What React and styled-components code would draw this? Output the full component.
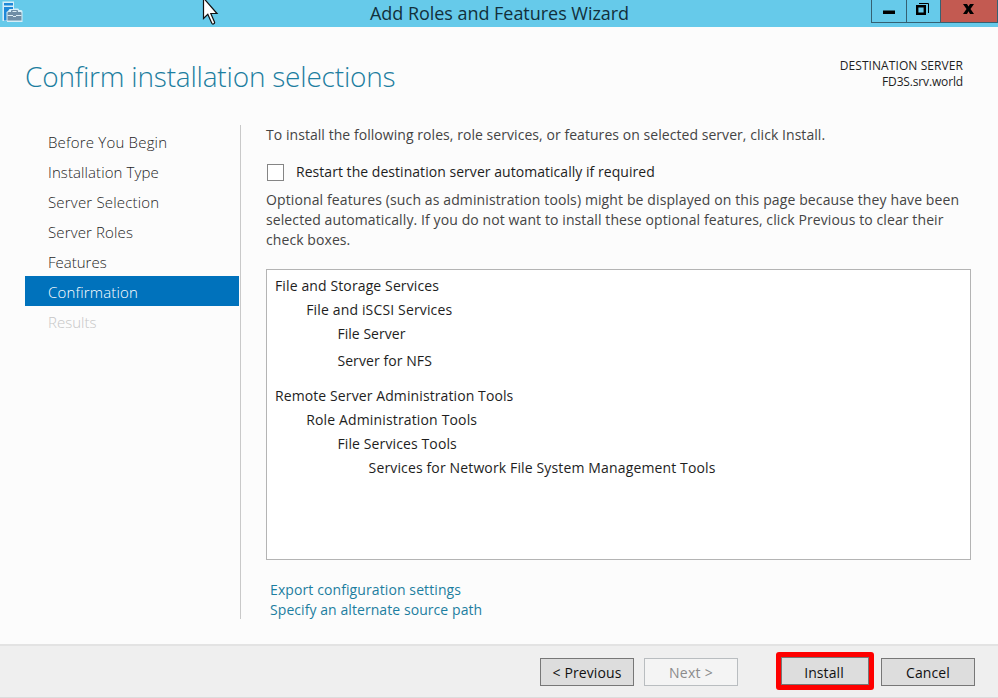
import React from 'react';
import styled, { createGlobalStyle } from 'styled-components';

const GlobalStyle = createGlobalStyle`
  * { box-sizing: border-box; }
  html, body { margin: 0; padding: 0; overflow: hidden; }
`;

const Wizard = styled.div`
  position: relative;
  display: flex;
  flex-direction: column;
  width: 998px;
  height: 698px;
  background: #fcfcfc;
  color: #1e1e1e;
  font-family: "Open Sans", "Noto Sans", sans-serif;
  font-size: 14px;
  line-height: 20px;
  white-space: nowrap;
  overflow: hidden;
`;

const TitleBar = styled.header`
  display: grid;
  grid-template-columns: 370px 1fr 127px;
  height: 27px;
  flex: none;
  background: #66caea;
`;

const AppIcon = styled.svg`
  display: block;
  width: 24px;
  height: 24px;
`;

const WindowTitle = styled.h1`
  margin: 0;
  font-size: 18px;
  font-weight: 400;
  line-height: 26px;
  letter-spacing: -0.04px;
  color: #12303b;
`;

const WindowControls = styled.div`
  display: flex;
  height: 23px;
  border: 1px solid #356172;
  border-top: 0;
`;

const ControlButton = styled.button`
  display: block;
  width: ${(p) => p.$width}px;
  height: 22px;
  padding: 0;
  border: 0;
  border-left: ${(p) => (p.$first ? '0' : '1px solid #356172')};
  background: ${(p) => (p.$danger ? '#c35a51' : 'transparent')};
`;

const Glyph = styled.svg`
  display: block;
  width: 100%;
  height: 22px;
`;

const Cursor = styled.svg`
  position: absolute;
  left: 201px;
  top: 0;
  width: 18px;
  height: 26px;
`;

const Heading = styled.div`
  display: flex;
  justify-content: space-between;
  height: 98px;
  padding: 30px 35px 0 25px;
`;

const PageTitle = styled.h2`
  margin: 0;
  font-size: 28px;
  font-weight: 300;
  line-height: 38px;
  letter-spacing: -0.2px;
  color: #1c7ea0;
`;

const Destination = styled.div`
  padding-top: 1px;
  font-size: 12px;
  line-height: 16px;
  text-align: right;
`;

const Text = styled.span`
  letter-spacing: ${(p) => p.$track}px;
`;

const Body = styled.div`
  display: flex;
  height: 494px;
  flex: none;
`;

const Steps = styled.nav`
  width: 241px;
  padding: 1px 1px 0 25px;
  border-right: 1px solid #c9c9c9;
`;

const Step = styled.div`
  height: 30px;
  padding-left: 23px;
  font-size: 15px;
  font-weight: 300;
  line-height: 32px;
  color: ${(p) => (p.$current ? '#ffffff' : p.$disabled ? '#c6c6c6' : '#1e1e1e')};
  background: ${(p) => (p.$current ? '#0072bc' : 'transparent')};
`;

const Content = styled.main`
  width: 705px;
  margin-left: 25px;
`;

const Paragraph = styled.p`
  margin: 0;
  color: #444;
`;

const CheckRow = styled.label`
  display: flex;
  align-items: center;
  gap: 12px;
  height: 20px;
  margin: 17px 0 8px;
  padding-left: 1px;
  line-height: 22px;
`;

const CheckBox = styled.span`
  width: 17px;
  height: 17px;
  border: 1px solid #858585;
  background: #fff;
`;

const SelectionList = styled.ul`
  height: 291px;
  margin: 19px 0 0;
  padding: 6px 0 0 8px;
  border: 1px solid #b4b4b4;
  background: #fff;
  list-style: none;
`;

const Selection = styled.li`
  height: 20px;
  margin-top: ${(p) => p.$gap}px;
  padding-left: ${(p) => p.$level * 31.2}px;
`;

const Links = styled.div`
  display: flex;
  flex-direction: column;
  align-items: flex-start;
  padding: 20px 0 0 4px;
`;

const Link = styled.a`
  height: 20px;
  color: #1c7ea0;
`;

const Footer = styled.footer`
  display: flex;
  align-items: flex-start;
  justify-content: flex-end;
  height: 54px;
  margin-top: auto;
  padding: 12px 23px 0 0;
  border-top: 2px solid #e3e3e3;
  border-bottom: 1px solid #dcdcdc;
  background: #efefef;
`;

const Button = styled.button`
  width: 94px;
  height: 28px;
  margin-left: ${(p) => p.$gap || 0}px;
  padding: 2px 0 0;
  border: 1px solid ${(p) => (p.$muted ? '#b9bdc0' : '#777')};
  background: ${(p) => (p.$muted ? '#f4f4f4' : '#dddddd')};
  color: ${(p) => (p.$muted ? '#8b8b8b' : '#111')};
  font: inherit;
  line-height: 22px;
`;

const Highlight = styled.div`
  margin: -6px 7px -6px 38px;
  border: 5px solid #fe0000;
  border-radius: 3px;
  background: #efefef;

  ${Button} {
    display: block;
    width: 88px;
    padding: 4px 2px 0 0;
  }
`;

const steps = [
  ['Before You Begin', 0.2],
  ['Installation Type', 0.1],
  ['Server Selection', 0.19],
  ['Server Roles', 0.13],
  ['Features', 0],
  ['Confirmation', 0.18],
  ['Results', 0],
];

const selections = [
  ['File and Storage Services', 0, 0, 0.12],
  ['File and iSCSI Services', 1, 4, 0.15],
  ['File Server', 2, 4, 0.04],
  ['Server for NFS', 2, 7, 0.08],
  ['Remote Server Administration Tools', 0, 15, 0.1],
  ['Role Administration Tools', 1, 4, 0.15],
  ['File Services Tools', 2, 4, 0.12],
  ['Services for Network File System Management Tools', 3, 4, 0.14],
];

export default function App() {
  return (
    <Wizard>
      <GlobalStyle />
      <TitleBar>
        <AppIcon viewBox="0 0 24 24">
          <path d="M2.5 1.5h11.5v7h4q1 0 1 1.5h2q1.5 0 1.5 1.5v10.5H7v-1H2.5z" fill="#d5eef8" />
          <path d="M4 3h9v2.5H4zM4 7h9v2H9.5L8 11 6.5 12v8.5H4z" fill="#1e88d8" />
          <path d="M7.5 13q0-1 1-1H11v-1q0-1 1-1h5q1 0 1 1v1h2.500q1 0 1 1v7.500H7.500z" fill="#6f8da5" />
          <path d="M12.500 12h4v-.9h-4zM7.500 15h5.500v1h3v-1h5.500v1H16v1h-3v-1H7.500z" fill="#dcecf3" />
        </AppIcon>
        <WindowTitle>Add Roles and Features Wizard</WindowTitle>
        <WindowControls>
          <ControlButton $width={34} $first aria-label="Minimize">
            <Glyph viewBox="0 0 34 22"><path d="M11 10.500h12v3.500H11z" fill="#000" /></Glyph>
          </ControlButton>
          <ControlButton $width={34} aria-label="Restore">
            <Glyph viewBox="0 0 33 22">
              <path d="M12 3.500h9.500V13" fill="none" stroke="#000" />
              <path d="M10.200 6.200h7.600v7.600h-7.600z" fill="none" stroke="#000" strokeWidth="2.4" />
            </Glyph>
          </ControlButton>
          <ControlButton $width={57} $danger aria-label="Close">
            <Glyph viewBox="0 0 56 22">
              <path d="M22 4h4l1.500 2.500L29 4h4l-3.500 5 3.500 5h-4l-1.500-2.700L26 14h-4l3.500-5z" fill="#000" />
            </Glyph>
          </ControlButton>
        </WindowControls>
      </TitleBar>

      <Heading>
        <PageTitle>Confirm installation selections</PageTitle>
        <Destination>
          <Text $track={0.08}>DESTINATION SERVER</Text>
          <br />
          <Text $track={-0.15}>FD3S.srv.world</Text>
        </Destination>
      </Heading>

      <Body>
        <Steps>
          {steps.map(([label, track]) => (
            <Step key={label} $current={label === 'Confirmation'} $disabled={label === 'Results'}>
              <Text $track={track}>{label}</Text>
            </Step>
          ))}
        </Steps>
        <Content>
          <Paragraph>
            <Text $track={0.055}>
              To install the following roles, role services, or features on selected server, click Install.
            </Text>
          </Paragraph>
          <CheckRow>
            <CheckBox />
            <Text $track={0.04}>Restart the destination server automatically if required</Text>
          </CheckRow>
          <Paragraph>
            <Text $track={0.115}>
              Optional features (such as administration tools) might be displayed on this page because they have been
            </Text>
            <br />
            <Text $track={0.1}>
              selected automatically. If you do not want to install these optional features, click Previous to clear their
            </Text>
            <br />
            <Text $track={0.08}>check boxes.</Text>
          </Paragraph>
          <SelectionList>
            {selections.map(([label, level, gap, track]) => (
              <Selection key={label} $level={level} $gap={gap}>
                <Text $track={track}>{label}</Text>
              </Selection>
            ))}
          </SelectionList>
          <Links>
            <Link><Text $track={0.1}>Export configuration settings</Text></Link>
            <Link><Text $track={0.07}>Specify an alternate source path</Text></Link>
          </Links>
        </Content>
      </Body>

      <Footer>
        <Button><Text $track={0.1}>&lt; Previous</Text></Button>
        <Button $muted $gap={10}><Text $track={0.3}>Next &gt;</Text></Button>
        <Highlight>
          <Button><Text $track={0.1}>Install</Text></Button>
        </Highlight>
        <Button><Text $track={0.1}>Cancel</Text></Button>
      </Footer>

      <Cursor viewBox="0 0 18 26">
        <path d="M2.5-2V18.5l4.3-4.2 4 9q.6 1 1.7.6 1.5-.7 1-1.8l-3.7-8.6h6.2z" fill="#fff" stroke="#111" strokeWidth="1.2" />
      </Cursor>
    </Wizard>
  );
}
